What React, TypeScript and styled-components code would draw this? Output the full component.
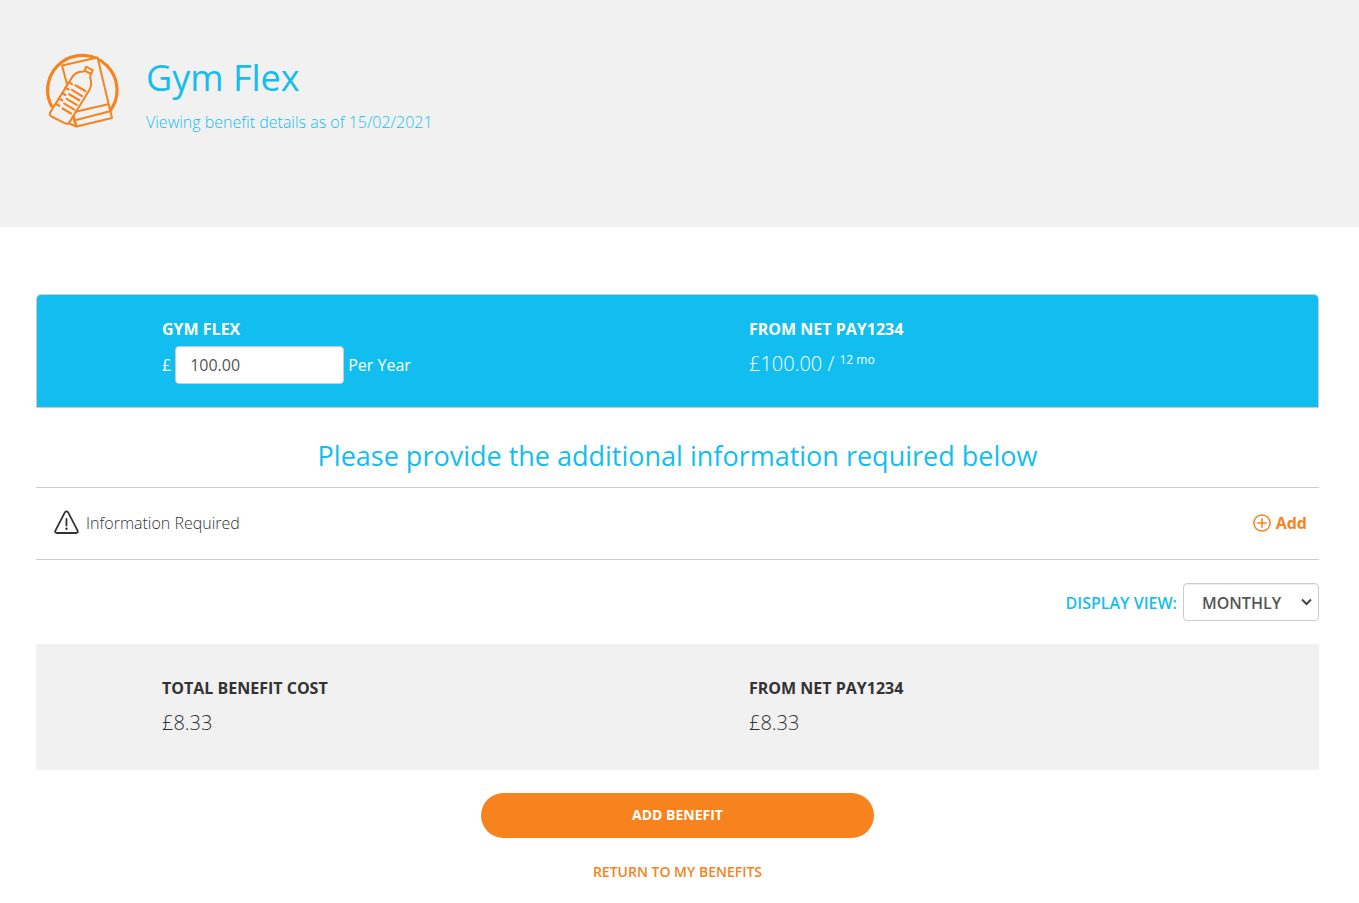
import React, { useState } from "react";
import styled, { createGlobalStyle } from "styled-components";

const blue = "#12bef0";
const orange = "#f6831e";
const grey = "#f1f1f1";

const GlobalStyle = createGlobalStyle`
  *, *::before, *::after { box-sizing: border-box; }
  body {
    margin: 0;
    background: #fff;
    color: #333;
    font-family: "Open Sans", "Liberation Sans", sans-serif;
    font-size: 16px;
    line-height: 24px;
  }
  h1, h2, h3, p { margin: 0; }
`;

const Header = styled.header`
  display: flex;
  align-items: flex-start;
  gap: 26px;
  padding: 53px 40px 90px 45px;
  min-height: 227px;
  background: ${grey};
  color: ${blue};
`;

const HeaderIcon = styled.svg`
  flex: none;
  width: 75px;
  height: 75px;
`;

const Title = styled.h1`
  font-size: 36px;
  font-weight: 400;
  line-height: 50px;
`;

const Subtitle = styled.p`
  margin-top: 7px;
  font-weight: 300;
`;

const Main = styled.main`
  padding: 67px 40px 16px 36px;
`;

const Panel = styled.section<{ $tone: "blue" | "grey" }>`
  display: grid;
  grid-template-columns: 1fr 1fr;
  column-gap: 18px;
  border: 1px solid ${(p) => (p.$tone === "blue" ? "#ccc" : grey)};
  border-radius: ${(p) => (p.$tone === "blue" ? "5px 5px 0 0" : "0")};
  background: ${(p) => (p.$tone === "blue" ? blue : grey)};
  color: ${(p) => (p.$tone === "blue" ? "#fff" : "#333")};
  padding: ${(p) => (p.$tone === "blue" ? "22px 0 23px 125px" : "31px 0 32px 125px")};
`;

const PanelLabel = styled.h3`
  font-size: 16px;
  font-weight: 700;
  line-height: 24px;
`;

const Amount = styled.p`
  margin-top: 9px;
  font-size: 20px;
  font-weight: 300;
  line-height: 28px;
`;

const Period = styled.sup`
  font-size: 12px;
  font-weight: 400;
  line-height: 0;
  vertical-align: 7px;
`;

const AmountField = styled.div`
  display: flex;
  align-items: center;
  gap: 4px;
  margin-top: 5px;
`;

const AmountInput = styled.input`
  width: 169px;
  height: 38px;
  padding: 0 14px;
  border: 1px solid #ccc;
  border-radius: 4px;
  background: #fff;
  box-shadow: inset 0 1px 1px rgba(0, 0, 0, 0.075);
  color: #555;
  font: inherit;
`;

const Prompt = styled.h2`
  padding: 28px 0 12px;
  color: ${blue};
  font-size: 27px;
  font-weight: 400;
  line-height: 39px;
  text-align: center;
`;

const RequirementRow = styled.div`
  display: flex;
  align-items: center;
  justify-content: space-between;
  min-height: 73px;
  padding: 0 12px 2px 18px;
  border-top: 1px solid #ccc;
  border-bottom: 1px solid #ccc;
`;

const RequirementName = styled.p`
  display: flex;
  align-items: center;
  gap: 7px;
  font-weight: 300;
`;

const AddButton = styled.button`
  display: flex;
  align-items: center;
  gap: 5px;
  padding: 0;
  border: 0;
  background: none;
  color: ${orange};
  font: inherit;
  font-weight: 700;
  cursor: pointer;
`;

const ViewBar = styled.div`
  display: flex;
  align-items: center;
  justify-content: flex-end;
  gap: 6px;
  padding: 23px 0;
`;

const ViewLabel = styled.label`
  padding-top: 1px;
  color: ${blue};
  font-weight: 600;
`;

const SelectWrap = styled.div`
  display: grid;
  align-items: center;
  justify-items: end;

  > * {
    grid-area: 1 / 1;
  }

  > svg {
    margin-right: 7px;
    pointer-events: none;
  }
`;

const ViewSelect = styled.select`
  appearance: none;
  width: 136px;
  height: 38px;
  padding: 1px 32px 0 18px;
  border: 1px solid #ccc;
  border-radius: 4px;
  background: #fff;
  box-shadow: inset 0 1px 1px rgba(0, 0, 0, 0.075);
  color: #555;
  font: inherit;
  font-weight: 600;
`;

const Actions = styled.div`
  display: flex;
  flex-direction: column;
  align-items: center;
  gap: 22px;
  padding-top: 23px;
`;

const PrimaryButton = styled.button`
  width: 393px;
  max-width: 100%;
  height: 45px;
  padding: 0 0 2px;
  border: 0;
  border-radius: 23px;
  background: ${orange};
  color: #fff;
  font: inherit;
  font-size: 14px;
  font-weight: 700;
  cursor: pointer;
`;

const ReturnLink = styled.a`
  color: ${orange};
  font-size: 14px;
  font-weight: 600;
  text-decoration: none;
`;

function GymIcon() {
  return (
    <HeaderIcon viewBox="0 0 75 75" fill="none" stroke={orange} strokeWidth="2" strokeLinecap="round" strokeLinejoin="round" aria-hidden="true">
      <path d="M6.500 53A34.700 34.700 0 1 1 65 58" strokeWidth="3.200" />
      <path d="M17 12.500L52.500 4.500 67 65 31.500 73.500 28 59.500 22.500 33z" fill={grey} />
      <path d="M29.500 59L63 51.200M31 67L65 58.200M24 70.500l7.500 3-3-8" />
      <path
        d="M39.700 17.700l6.300 3.300 1.800-3.800-6.800-3.500zM39.700 17.700l-1.400.9c-5 .2-9.800 2-12 7L5.300 59.300c-.8 1.700-.3 3.300 1.200 4.200l13.700 6.900c1.800.8 3.300.3 4.300-1.300L43.500 38.500c3-4.700 3.500-9 1.600-14.200l.9-3.300"
        fill={grey}
      />
      <path
        d="M30.300 32.300l10 5.700M27 36.900l10 6.200M24.200 41.300l10 6M21.700 45.900l10 6M19.300 50.600l10 6M17.500 55.500l8.500 5M23.700 29.300l3.300 1.800M20.300 34.700l3.300 1.800M17.200 40.200l3.300 1.800M14 45.600l3.300 1.800M11 51l3.300 1.800"
        strokeWidth="2.200"
      />
    </HeaderIcon>
  );
}

function WarningIcon() {
  return (
    <svg width="25" height="25" viewBox="0 0 25 25" fill="none" stroke="#333" strokeWidth="1.800" strokeLinecap="round" strokeLinejoin="round" aria-hidden="true">
      <path d="M11 2.200c.8-1.100 2.200-1.100 3 0L23.600 20.600c.6 1.400 0 2.400-1.500 2.400H2.900c-1.500 0-2.100-1-1.500-2.400z" />
      <path d="M12.500 9v6.500" strokeWidth="1.800" />
      <circle cx="12.500" cy="18.800" r="1.200" fill="#333" stroke="none" />
    </svg>
  );
}

function PlusIcon() {
  return (
    <svg width="18" height="18" viewBox="0 0 18 18" fill="none" stroke={orange} strokeWidth="1.500" strokeLinecap="round" aria-hidden="true">
      <circle cx="9" cy="9" r="8.100" />
      <path d="M9 4.800v8.400M4.800 9h8.400" />
    </svg>
  );
}

function ChevronIcon() {
  return (
    <svg width="11" height="8" viewBox="0 0 11 8" fill="none" stroke="#444" strokeWidth="2" aria-hidden="true">
      <path d="M1 1.500l4.500 4.500L10 1.500" />
    </svg>
  );
}

export default function App() {
  const [amount, setAmount] = useState("100.00");
  const [view, setView] = useState("MONTHLY");

  return (
    <>
      <GlobalStyle />
      <Header>
        <GymIcon />
        <div>
          <Title>Gym Flex</Title>
          <Subtitle>Viewing benefit details as of 15/02/2021</Subtitle>
        </div>
      </Header>
      <Main>
        <Panel $tone="blue">
          <div>
            <PanelLabel as="label" htmlFor="amount">GYM FLEX</PanelLabel>
            <AmountField>
              <span>£</span>
              <AmountInput id="amount" value={amount} onChange={(e) => setAmount(e.target.value)} />
              <span>Per Year</span>
            </AmountField>
          </div>
          <div>
            <PanelLabel>FROM NET PAY1234</PanelLabel>
            <Amount>
              £100.00 / <Period>12 mo</Period>
            </Amount>
          </div>
        </Panel>

        <Prompt>Please provide the additional information required below</Prompt>
        <RequirementRow>
          <RequirementName>
            <WarningIcon />
            Information Required
          </RequirementName>
          <AddButton type="button">
            <PlusIcon />
            Add
          </AddButton>
        </RequirementRow>

        <ViewBar>
          <ViewLabel htmlFor="view">DISPLAY VIEW:</ViewLabel>
          <SelectWrap>
            <ViewSelect id="view" value={view} onChange={(e) => setView(e.target.value)}>
              <option>MONTHLY</option>
              <option>ANNUAL</option>
            </ViewSelect>
            <ChevronIcon />
          </SelectWrap>
        </ViewBar>

        <Panel $tone="grey">
          <div>
            <PanelLabel>TOTAL BENEFIT COST</PanelLabel>
            <Amount>£8.33</Amount>
          </div>
          <div>
            <PanelLabel>FROM NET PAY1234</PanelLabel>
            <Amount>£8.33</Amount>
          </div>
        </Panel>

        <Actions>
          <PrimaryButton type="button">ADD BENEFIT</PrimaryButton>
          <ReturnLink href="#benefits">RETURN TO MY BENEFITS</ReturnLink>
        </Actions>
      </Main>
    </>
  );
}
